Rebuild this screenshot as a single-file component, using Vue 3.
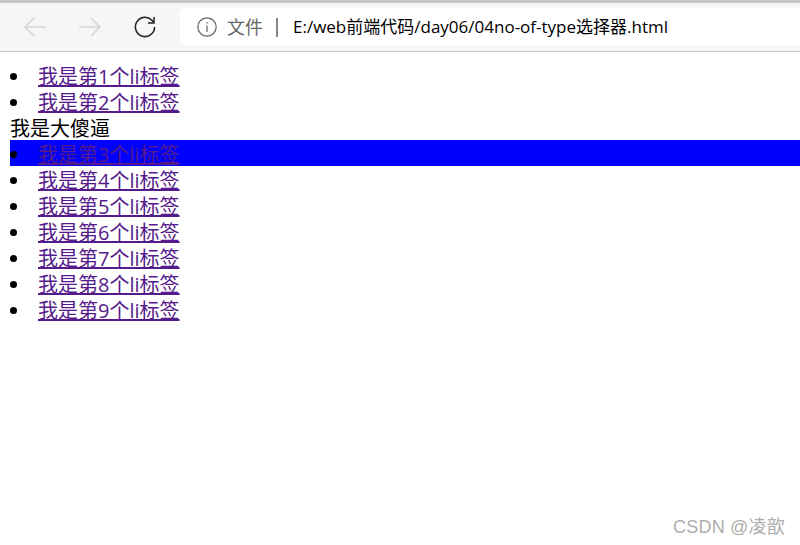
<script setup>
const before = [1, 2]
const after = [4, 5, 6, 7, 8, 9]
</script>

<template>
  <div class="page">
    <header class="toolbar">
      <svg class="nav" width="26" height="24" viewBox="0 0 26 24" fill="none" stroke="#d6d6d6" stroke-width="1.6">
        <path d="M24 12H3M12 3l-9 9 9 9" />
      </svg>
      <svg class="nav" width="26" height="24" viewBox="0 0 26 24" fill="none" stroke="#d6d6d6" stroke-width="1.6">
        <path d="M2 12h21M14 3l9 9-9 9" />
      </svg>
      <svg class="reload" width="24" height="24" viewBox="0 0 24 24" fill="none" stroke="#222" stroke-width="1.5">
        <path d="M20.5 7.5A9.6 9.6 0 1 0 21.6 12" />
        <path d="M21 2v6h-6" />
      </svg>
      <div class="address">
        <svg width="20" height="20" viewBox="0 0 20 20" fill="none" stroke="#666" stroke-width="1.2">
          <circle cx="10" cy="10" r="9.2" />
          <path d="M10 8.5V15M10 5v1.6" />
        </svg>
        <span class="scheme">文件</span>
        <span class="sep"></span>
        <span class="url">E:/web前端代码/day06/04no-of-type选择器.html</span>
      </div>
    </header>
    <main class="content">
      <ul>
        <li v-for="n in before" :key="n"><a href="#">我是第{{ n }}个li标签</a></li>
      </ul>
      <div class="line">我是大傻逼</div>
      <ul>
        <li class="hit"><a href="#">我是第3个li标签</a></li>
        <li v-for="n in after" :key="n"><a href="#">我是第{{ n }}个li标签</a></li>
      </ul>
    </main>
    <div class="mark">CSDN @凌歆</div>
  </div>
</template>

<style scoped>
.page {
  position: relative;
  width: 800px;
  height: 545px;
  overflow: hidden;
  background: #fff;
  color: #000;
  font-family: "Noto Sans CJK SC", "Open Sans", sans-serif;
}
.toolbar {
  box-sizing: border-box;
  height: 52px;
  display: flex;
  align-items: center;
  background: #f6f6f6;
  border-top: 3px solid #c6c6c6;
  border-bottom: 1px solid #c4c4c4;
}
.nav { margin-left: 22px; flex: none; }
.nav + .nav { margin-left: 29px; }
.reload { margin-left: 30px; flex: none; }
.address {
  flex: 1;
  height: 38px;
  margin-left: 23px;
  padding-left: 17px;
  display: flex;
  align-items: center;
  background: #fff;
  border-radius: 6px 0 0 6px;
}
.scheme {
  margin-left: 10px;
  padding-bottom: 2px;
  font-size: 18px;
  color: #666;
}
.sep {
  width: 2px;
  height: 19px;
  margin: 0 15px 0 13px;
  background: #888;
}
.url {
  padding-bottom: 3px;
  font-family: "Open Sans", "Noto Sans CJK SC", sans-serif;
  font-size: 17px;
  white-space: nowrap;
}
.content {
  padding: 10px 0 0 10px;
  font-family: "Open Sans", "Noto Sans CJK SC", sans-serif;
  font-size: 20px;
  line-height: 22px;
}
ul {
  margin: 0;
  padding: 0;
  list-style: disc inside;
}
li, .line { padding-top: 4px; }
a { color: #551a8b; }
.hit { background: #00f; }
.mark {
  position: absolute;
  right: 15px;
  bottom: 6px;
  font-family: "Liberation Sans", "Noto Sans CJK SC", sans-serif;
  font-size: 18px;
  letter-spacing: 0.2px;
  line-height: 24px;
  color: #aeaeae;
}
</style>
